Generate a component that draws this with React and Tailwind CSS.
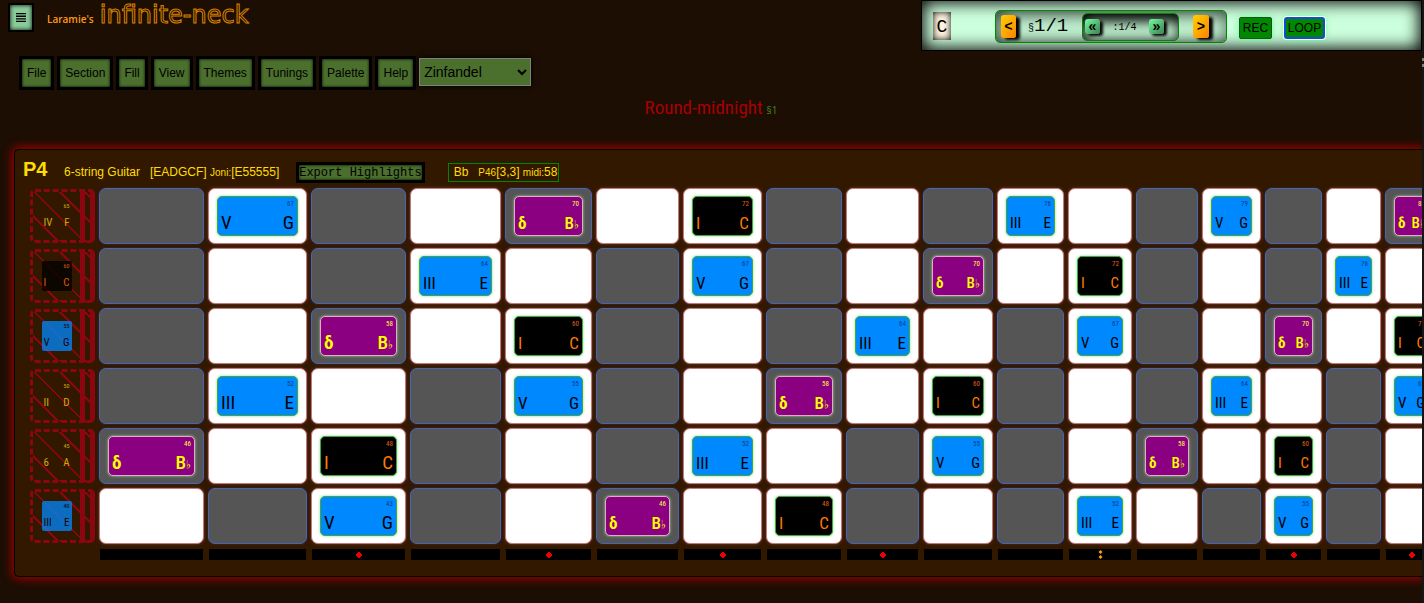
import { useState } from "react";
import { clsx } from "clsx";

const MENUS = [
  "File",
  "Section",
  "Fill",
  "View",
  "Themes",
  "Tunings",
  "Palette",
  "Help",
];

const THEMES = ["Zinfandel", "Midnight", "Maple"];

const STRINGS = [
  { midi: 65, role: "IV", note: "F" },
  { midi: 60, role: "I", note: "C" },
  { midi: 55, role: "V", note: "G" },
  { midi: 50, role: "II", note: "D" },
  { midi: 45, role: "6", note: "A" },
  { midi: 40, role: "III", note: "E" },
];

const FRETS = Array.from({ length: 17 }, (_, i) => i + 1);
const BLACK_KEYS = [1, 3, 6, 8, 10];
const SINGLE_DOTS = [3, 5, 7, 9, 15, 17];

// Highlighted notes, keyed by pitch class
const HIGHLIGHTS = {
  0: {
    role: "I",
    note: "C",
    chip: "bg-black border-[#3fa83f] text-[#ff7a00]",
    small: "text-[#e06010]",
  },
  4: {
    role: "III",
    note: "E",
    chip: "bg-[#0088ff] border-[#3fa83f] text-black",
    small: "text-[#0a3f80]",
  },
  7: {
    role: "V",
    note: "G",
    chip: "bg-[#0088ff] border-[#3fa83f] text-black",
    small: "text-[#0a3f80]",
  },
  10: {
    role: "δ",
    note: "B",
    flat: true,
    chip: "bg-[#8b0080] border-[#e8a8c8] text-[#ffff00]",
    small: "text-[#ffff40]",
  },
};

const noteFont =
  "font-['Roboto_Condensed','Liberation_Sans_Narrow','DejaVu_Sans_Condensed',sans-serif]";

function noteSize(fret) {
  if (fret <= 3) return "text-[19px]";
  if (fret <= 9) return "text-[17px]";
  return "text-[15px]";
}

function Chip({ midi, fret }) {
  const h = HIGHLIGHTS[midi % 12];
  return (
    <div
      className={clsx(
        "flex h-10 flex-col justify-between rounded-[5px] border px-[3px] pt-[3px] pb-0.5 shadow-[0_0_3px_#8fd88f]",
        h.chip,
      )}
    >
      <span className={clsx("text-right text-[7px] leading-[8px]", h.small)}>
        {midi}
      </span>
      <span
        className={clsx(
          "flex items-end justify-between leading-5",
          noteSize(fret),
        )}
      >
        <span className={clsx(h.flat && "font-bold")}>{h.role}</span>
        <span className={clsx("whitespace-nowrap", h.flat && "font-medium")}>
          {h.note}
          {h.flat && <sub className="bottom-0 text-[12px]">♭</sub>}
        </span>
      </span>
    </div>
  );
}

function FretCell({ midi, fret }) {
  const dark = BLACK_KEYS.includes(midi % 12);
  return (
    <div
      className={clsx(
        "rounded-[7px] border px-2 py-[7px]",
        dark
          ? "border-[#4a64b0] bg-[#555555] shadow-[0_0_2px_#303a60]"
          : "border-[#c07878] bg-white shadow-[0_0_3px_#7a3c30]",
      )}
    >
      {HIGHLIGHTS[midi % 12] && <Chip midi={midi} fret={fret} />}
    </div>
  );
}

function OpenString({ midi, role, note }) {
  const pc = midi % 12;
  return (
    <div className="my-px flex items-stretch rounded-[5px] border-3 border-r-5 border-dashed border-[#8b0610] bg-[repeating-linear-gradient(45deg,transparent_0_16px,#8b0610_16px_18px)] [border-right-style:solid]">
      <div className="flex flex-1 items-center justify-center">
        <div
          className={clsx(
            "flex size-[30px] flex-col justify-between rounded-[2px] px-0.5 pt-px opacity-75",
            pc === 0 && "bg-black text-[#ff7a00]",
            (pc === 4 || pc === 7) && "bg-[#0088ff] text-black",
            ![0, 4, 7].includes(pc) && "text-[#ffdd00]",
          )}
        >
          <span className="text-right text-[6px] leading-[8px]">{midi}</span>
          <span className="flex justify-between text-[11px] leading-[16px]">
            <span>{role}</span>
            <span>{note}</span>
          </span>
        </div>
      </div>
      <div className="mr-[5px] w-[5px] bg-[#8b0610]" />
    </div>
  );
}

function FretMarker({ fret }) {
  return (
    <div className="mx-px mt-px flex h-[11px] items-center justify-center bg-black">
      {SINGLE_DOTS.includes(fret) && (
        <svg width="6" height="6" viewBox="0 0 6 6" fill="#f00000">
          <path d="M2 0h2v1h1v1h1v2H5v1H4v1H2V5H1V4H0V2h1V1h1z" />
        </svg>
      )}
      {fret === 12 && (
        <svg width="5" height="9" viewBox="0 0 5 9" fill="#ff9c10">
          <path d="M2.5 0 4.5 2 2.5 4 0.5 2ZM2.5 5 4.5 7 2.5 9 0.5 7Z" />
        </svg>
      )}
    </div>
  );
}

function Transport() {
  return (
    <div className="flex h-[51px] w-[501px] items-start border border-black bg-[#ccffdd] pl-[11px] shadow-[inset_0_0_16px_2px_#000]">
      <span className="mt-[11px] flex h-7 w-[18px] items-center justify-center bg-[#fff4e0] pt-0.5 font-['Liberation_Mono',monospace] text-[18px] shadow-[inset_0_0_7px_#000]">
        C
      </span>
      <div className="mt-[9px] ml-11 flex h-[33px] w-[232px] items-center rounded-[5px] border border-[#008800] pl-[5px] font-['Liberation_Mono',monospace] shadow-[inset_3px_3px_20px_#000000c0]">
        <button className="h-[23px] w-[15px] rounded-[3px] bg-linear-to-br from-[#ffd000] to-[#ff8000] text-[14px] leading-[22px] font-bold shadow-[4px_2px_3px_#000]">
          &lt;
        </button>
        <span className="ml-3 w-[54px] text-[19px] whitespace-nowrap">
          <span className="text-[10px]">§</span>1/1
        </span>
        <div className="flex h-7 w-[97px] items-center justify-between rounded-[5px] border border-[#008800] pr-3.5 pl-0.5 shadow-[inset_2px_6px_14px_#000]">
          <button className="h-[15px] w-[15px] rounded-[3px] bg-linear-to-br from-[#70ffa0] to-[#408050] text-[14px] leading-[14px] font-bold shadow-[3px_2px_3px_#000]">
            «
          </button>
          <span className="pt-0.5 text-[10px]">:1/4</span>
          <button className="h-[15px] w-[15px] rounded-[3px] bg-linear-to-br from-[#70ffa0] to-[#408050] text-[14px] leading-[14px] font-bold shadow-[3px_2px_3px_#000]">
            »
          </button>
        </div>
        <button className="ml-3.5 h-[23px] w-[16px] rounded-[3px] bg-linear-to-br from-[#ffd000] to-[#ff8000] text-[14px] leading-[22px] font-bold shadow-[4px_2px_3px_#000]">
          &gt;
        </button>
      </div>
      <button className="mt-4 ml-3 h-[22px] w-[33px] rounded-[2px] border border-[#205020] bg-[#008800] text-[12px] shadow-[0_0_6px_#60ff90]">
        REC
      </button>
      <button className="mt-4 ml-3 h-[22px] w-[41px] rounded-[3px] border-2 border-[#1050d0] bg-[#008800] text-[12px] shadow-[0_0_0_1px_#fff,0_0_6px_#60ff90]">
        LOOP
      </button>
    </div>
  );
}

export default function App() {
  const [theme, setTheme] = useState("Zinfandel");

  return (
    <div className="flex min-h-screen bg-[#1c0e03] font-['Liberation_Sans',Arial,sans-serif] text-black">
      <main className="min-w-0 flex-1 overflow-hidden pb-[26px]">
        {/* Title bar */}
        <header className="flex items-start justify-between pl-2">
          <div className="flex items-start">
            <button
              aria-label="Menu"
              className="mt-[3px] flex h-[29px] w-[26px] items-center justify-center border-2 border-black bg-[#88cc99] shadow-[inset_0_0_4px_#000]"
            >
              <svg width="10" height="9" viewBox="0 0 10 9" fill="#000">
                <path d="M0 0h10v1.3H0zM0 2.6h10v1.3H0zM0 5.2h10v1.3H0zM0 7.7h10V9H0z" />
              </svg>
            </button>
            <h1 className="ml-[13px] flex items-baseline gap-1.5 leading-[30px]">
              <span className="font-['Open_Sans',sans-serif] text-[10px] font-semibold text-[#ff9c10]">
                Laramie's
              </span>
              <span className="font-['DejaVu_Sans',Verdana,sans-serif] text-[24px] text-[#1c0e03] [-webkit-text-stroke:1px_#d98200]">
                infinite-neck
              </span>
            </h1>
          </div>
          <Transport />
        </header>

        {/* Menus */}
        <nav className="mt-[5px] flex items-start gap-[3px] pl-[19px]">
          {MENUS.map((name) => (
            <button
              key={name}
              className="h-[34px] border-3 border-black bg-[#4b6f2c] px-[5px] text-[12px] shadow-[inset_0_0_3px_#000]"
            >
              {name}
            </button>
          ))}
          <select
            aria-label="Theme"
            value={theme}
            onChange={(e) => setTheme(e.target.value)}
            className="mt-0.5 h-7 w-[112px] border border-[#808080] bg-[#4b6f2c] text-[14px] shadow-[0_0_6px_#000]"
          >
            {THEMES.map((t) => (
              <option key={t}>{t}</option>
            ))}
          </select>
        </nav>

        {/* Song title */}
        <div className="mt-0.5 flex h-8 items-baseline justify-center gap-1">
          <h2 className={clsx("text-[19px] leading-8 text-[#a80000]", noteFont)}>
            Round-midnight
          </h2>
          <span className="font-['Open_Sans',sans-serif] text-[10px] text-[#4b7f2c]">
            §1
          </span>
        </div>

        {/* Neck */}
        <section className="mt-[25px] ml-3.5 rounded-l-[5px] border border-r-0 border-black bg-[#331800] pb-4 pl-[15px] shadow-[0_0_10px_2px_#a00000]">
          <div className="-ml-[7px] flex h-[38px] items-center pt-1.5 text-[12px] text-[#ffdd00]">
            <h3 className="-mt-1.5 w-[41px] text-[20px] font-bold">P4</h3>
            <span>6-string Guitar</span>
            <span className="ml-2.5">
              [EADGCF] <span className="text-[10px]">Joni:</span>[E55555]
            </span>
            <button className="ml-[17px] h-[21px] border-3 border-black bg-[#4b6f2c] font-['Liberation_Mono',monospace] text-[12px] leading-[17px] text-black shadow-[inset_0_0_3px_#000]">
              Export Highlights
            </button>
            <div className="ml-[23px] border border-[#008800] pr-px pl-[5px] leading-4">
              Bb
              <span className="ml-2.5 text-[10px]">P46</span>[3,3]{" "}
              <span className="text-[10px]">midi:</span>58
            </div>
          </div>

          <div
            className={clsx(
              "grid grid-cols-[65px_105px_99px_95px_91px_87px_83px_79px_76px_73px_70px_67px_64px_62px_59px_57px_55px_53px] grid-rows-[repeat(6,56px)] gap-1",
              noteFont,
            )}
          >
            {STRINGS.map((s) => [
              <OpenString key={s.midi} {...s} />,
              ...FRETS.map((fret) => (
                <FretCell
                  key={`${s.midi}-${fret}`}
                  midi={s.midi + fret}
                  fret={fret}
                />
              )),
            ])}
            <div />
            {FRETS.map((fret) => (
              <FretMarker key={fret} fret={fret} />
            ))}
          </div>
        </section>
      </main>
      <div className="w-0.5 shrink-0 bg-[#161616] pt-[58px]">
        <div className="h-[9px] border-y-3 border-[#808080]" />
      </div>
    </div>
  );
}
